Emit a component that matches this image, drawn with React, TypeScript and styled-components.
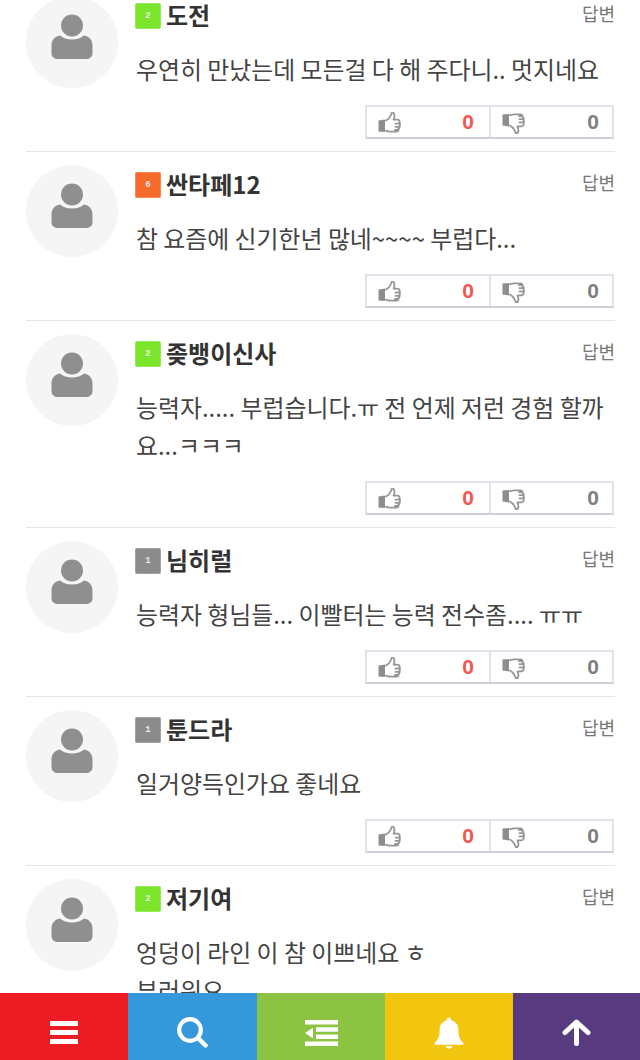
import React from "react";
import styled, { createGlobalStyle } from "styled-components";

type Comment = {
  name: string;
  level: number;
  lines: string[];
};

const comments: Comment[] = [
  { name: "도전", level: 2, lines: ["우연히 만났는데 모든걸 다 해 주다니.. 멋지네요"] },
  { name: "싼타페12", level: 6, lines: ["참 요즘에 신기한년 많네~~~~ 부럽다..."] },
  { name: "좆뱅이신사", level: 2, lines: ["능력자..... 부럽습니다.ㅠ 전 언제 저런 경험 할까", "요...ㅋㅋㅋ"] },
  { name: "님히럴", level: 1, lines: ["능력자 형님들... 이빨터는 능력 전수좀.... ㅠㅠ"] },
  { name: "툰드라", level: 1, lines: ["일거양득인가요 좋네요"] },
  { name: "저기여", level: 2, lines: ["엉덩이 라인 이 참 이쁘네요 ㅎ", "부러워요"] },
];

const levelColors: Record<number, string> = {
  1: "#8b8b8b",
  2: "#7be52c",
  6: "#f76b2a",
};

const GlobalStyle = createGlobalStyle`
  html, body {
    margin: 0;
    padding: 0;
    background: #fff;
    overflow: hidden;
  }
`;

const Screen = styled.div`
  width: 640px;
  height: 1060px;
  display: flex;
  flex-direction: column;
  font-family: "Noto Sans CJK KR", "Noto Sans", sans-serif;
`;

const Scroller = styled.div`
  flex: 1;
  min-height: 0;
  overflow: hidden;
`;

const List = styled.ul`
  list-style: none;
  margin: -17px 25px 0 26px;
  padding: 0;
`;

const Row = styled.li`
  display: grid;
  grid-template-columns: 92px 1fr;
  column-gap: 18px;
  padding: 13px 0 12px;
  border-bottom: 1px solid #e6e6e6;
`;

const Avatar = styled.div`
  width: 92px;
  height: 92px;
  box-sizing: border-box;
  padding-bottom: 10px;
  border-radius: 50%;
  background: #f5f5f5;
  display: flex;
  align-items: center;
  justify-content: center;
`;

const Body = styled.div`
  min-width: 0;
`;

const Head = styled.div`
  display: flex;
  align-items: flex-start;
  height: 53px;
`;

const Badge = styled.span<{ $color: string }>`
  width: 26px;
  height: 26px;
  margin: 7px 5px 0 -1px;
  border-radius: 2px;
  background: ${(p) => p.$color};
  box-shadow: inset 0 0 0 1px rgba(255, 255, 255, 0.2);
  color: rgba(255, 255, 255, 0.85);
  font: 700 9px/26px "Liberation Mono", monospace;
  text-align: center;
`;

const Name = styled.strong`
  margin-top: 5px;
  font-size: 24px;
  line-height: 28px;
  font-weight: 700;
  color: #333;
`;

const Reply = styled.span`
  margin-left: auto;
  font-size: 18px;
  line-height: 34px;
  color: #777;
`;

const Text = styled.p`
  margin: 0;
  padding-top: 1px;
  font-size: 23.9px;
  line-height: 38px;
  color: #444;
  white-space: nowrap;
`;

const Votes = styled.div`
  display: flex;
  width: 249px;
  height: 34px;
  box-sizing: border-box;
  margin: 17px 1px 0 auto;
  border: 2px solid #e2e2ea;
  border-bottom-color: #cfcfdc;
`;

const Vote = styled.div`
  flex: 0 0 122px;
  box-sizing: border-box;
  display: flex;
  align-items: center;
  justify-content: space-between;
  padding: 0 15px 0 11px;

  & + & {
    flex: 1;
    padding: 0 13px 0 11px;
    border-left: 2px solid #e2e2ea;
  }
`;

const Count = styled.span<{ $up?: boolean }>`
  font-family: "Liberation Sans", Arial, sans-serif;
  font-size: 21px;
  font-weight: 700;
  color: ${(p) => (p.$up ? "#f4574f" : "#7f7f7f")};
`;

const ThumbSvg = styled.svg<{ $down?: boolean }>`
  display: block;
  margin-top: ${(p) => (p.$down ? "2px" : "0")};
  transform: ${(p) => (p.$down ? "scaleY(-1)" : "none")};
`;

const BottomBar = styled.nav`
  display: grid;
  grid-template-columns: 128px 129px 128px 128px 127px;
  height: 67px;
  flex: none;
`;

const BarButton = styled.div<{ $color: string }>`
  background: ${(p) => p.$color};
  display: flex;
  align-items: center;
  justify-content: center;
  padding-top: 12px;
  box-sizing: border-box;
`;

const PersonIcon = () => (
  <svg width="42" height="46" viewBox="0 0 42 46" aria-hidden="true">
    <circle cx="21" cy="11.5" r="11" fill="#8f8f8f" />
    <path
      d="M9 21.5c3 2.6 7 4 12 4s9-1.4 12-4c5 .6 8.500 4.500 8.500 10v7.500c0 3.500-2.500 6-6 6h-29c-3.500 0-6-2.500-6-6v-7.500c0-5.500 3.500-9.400 8.500-10z"
      fill="#8f8f8f"
    />
  </svg>
);

const ThumbIcon = ({ down }: { down?: boolean }) => (
  <ThumbSvg $down={down} width="23" height="21" viewBox="0 0 23 21" aria-hidden="true">
    <path d="M.5 8.500l6.500-1v12.500l-6.500-.5z" fill="#8d8d8d" />
    <path
      d="M8 8.500c2-1 4-3 5-5.500l.7-1.800c.3-.7 1-.9 1.600-.4 1.200 1 1.300 2.800.9 4.600l-.6 2.300h3.800c1.800 0 2.700 1.500 2 3 .9.900.9 2.300 0 3.200.5 1.100.2 2.300-.8 3 .2 1.500-.8 2.800-2.400 2.800h-6.200c-1.800 0-2.700-.7-4-1M17.500 11.600h4M17.500 14.800h4M17 17.900h3.500"
      fill="none"
      stroke="#959595"
      strokeWidth="1.800"
      strokeLinejoin="round"
      strokeLinecap="round"
    />
  </ThumbSvg>
);

const MenuIcon = () => (
  <svg width="28" height="23" viewBox="0 0 28 23" aria-hidden="true">
    <path d="M.8 0h26.400a.8.8 0 0 1 .8.8v3.400a.8.8 0 0 1-.8.8H.8a.8.8 0 0 1-.8-.8V.8A.8.8 0 0 1 .8 0zM.8 9h26.400a.8.8 0 0 1 .8.8v3.400a.8.8 0 0 1-.8.8H.8a.8.8 0 0 1-.8-.8V9.800A.8.8 0 0 1 .8 9zM.8 18h26.400a.8.8 0 0 1 .8.8v3.400a.8.8 0 0 1-.8.8H.8a.8.8 0 0 1-.8-.8v-3.400a.8.8 0 0 1 .8-.8z" fill="#fff" />
  </svg>
);

const SearchIcon = () => (
  <svg width="31" height="31" viewBox="0 0 31 31" aria-hidden="true">
    <circle cx="13" cy="13" r="10.800" fill="none" stroke="#fff" strokeWidth="4.200" />
    <path d="M21.500 21.500l7 7" stroke="#fff" strokeWidth="4.500" strokeLinecap="round" />
  </svg>
);

const OutdentIcon = () => (
  <svg width="33" height="26" viewBox="0 0 33 26" aria-hidden="true">
    <path
      d="M0 0h33v4.500H0zM11 7.200h22v4.500H11zM11 14.400h22v4.500H11zM0 21.500h33V26H0zM8 7.500v11L0 13z"
      fill="#fff"
    />
  </svg>
);

const BellIcon = () => (
  <svg width="30" height="32" viewBox="0 0 32 33" aria-hidden="true">
    <path
      d="M16 0c1.300 0 2.200.9 2.200 2.200v.8c4.800 1 7.800 5 7.800 10 0 7 1.600 10.500 5.200 14 .8.800.3 2-.8 2H1.600c-1.100 0-1.600-1.200-.8-2C4.400 23.500 6 20 6 13c0-5 3-9 7.800-10v-.8C13.800.9 14.700 0 16 0z"
      fill="#fff"
    />
    <path d="M12.300 30.500h7.400c-.3 1.500-1.900 2.500-3.700 2.500s-3.400-1-3.700-2.500z" fill="#fff" />
  </svg>
);

const ArrowIcon = () => (
  <svg width="29" height="27" viewBox="0 0 29 27" aria-hidden="true">
    <path
      d="M14.500 5v19.500M3 13.500L14.500 3l11.500 10.500"
      fill="none"
      stroke="#fff"
      strokeWidth="5"
      strokeLinecap="round"
      strokeLinejoin="round"
    />
  </svg>
);

export default function App() {
  return (
    <Screen>
      <GlobalStyle />
      <Scroller>
        <List>
          {comments.map((c) => (
            <Row key={c.name}>
              <Avatar>
                <PersonIcon />
              </Avatar>
              <Body>
                <Head>
                  <Badge $color={levelColors[c.level]}>{c.level}</Badge>
                  <Name>{c.name}</Name>
                  <Reply>답변</Reply>
                </Head>
                <Text>
                  {c.lines.map((line, i) => (
                    <React.Fragment key={i}>
                      {i > 0 && <br />}
                      {line}
                    </React.Fragment>
                  ))}
                </Text>
                <Votes>
                  <Vote>
                    <ThumbIcon />
                    <Count $up>0</Count>
                  </Vote>
                  <Vote>
                    <ThumbIcon down />
                    <Count>0</Count>
                  </Vote>
                </Votes>
              </Body>
            </Row>
          ))}
        </List>
      </Scroller>
      <BottomBar>
        <BarButton $color="#ed1c24">
          <MenuIcon />
        </BarButton>
        <BarButton $color="#3498db">
          <SearchIcon />
        </BarButton>
        <BarButton $color="#8cc342">
          <OutdentIcon />
        </BarButton>
        <BarButton $color="#f2c50f">
          <BellIcon />
        </BarButton>
        <BarButton $color="#583b7e">
          <ArrowIcon />
        </BarButton>
      </BottomBar>
    </Screen>
  );
}
